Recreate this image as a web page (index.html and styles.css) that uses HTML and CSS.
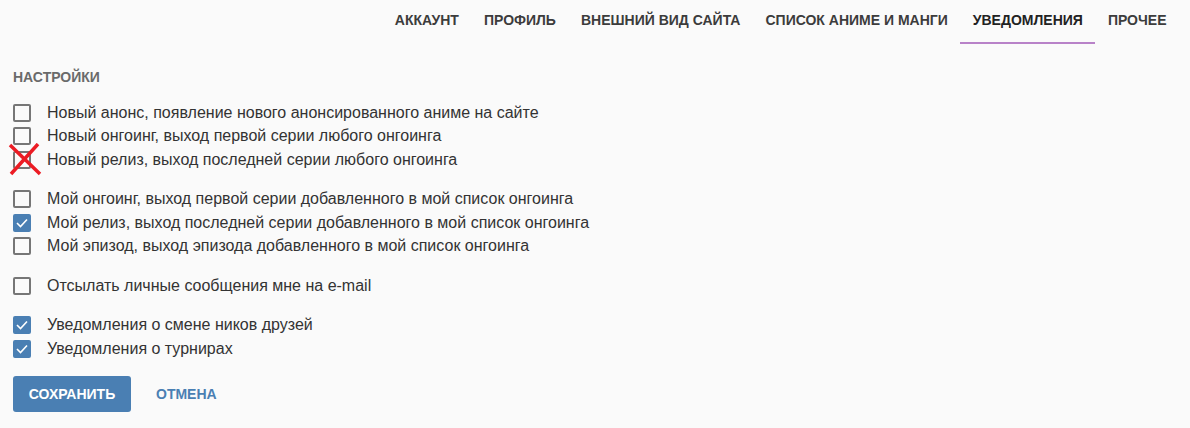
FILE: index.html
```html
<!DOCTYPE html>
<html lang="ru">
<head>
<meta charset="utf-8">
<link rel="stylesheet" href="styles.css">
</head>
<body>
<nav class="tabs">
  <a class="tab">Аккаунт</a>
  <a class="tab">Профиль</a>
  <a class="tab">Внешний вид сайта</a>
  <a class="tab">Список аниме и манги</a>
  <a class="tab active">Уведомления</a>
  <a class="tab">Прочее</a>
</nav>
<main class="content">
  <h3 class="section-title">Настройки</h3>
  <div class="group">
    <label class="row"><span class="box"></span><span>Новый анонс, появление нового анонсированного аниме на сайте</span></label>
    <label class="row"><span class="box"></span><span>Новый онгоинг, выход первой серии любого онгоинга</span></label>
    <label class="row"><span class="box crossed"><svg class="cross" width="34" height="33" viewBox="0 0 34 33"><path d="M2 2 L32 31 M30 1 L3 31" stroke="#ec1c24" stroke-width="3.5" fill="none"/></svg></span><span>Новый релиз, выход последней серии любого онгоинга</span></label>
  </div>
  <div class="group">
    <label class="row"><span class="box"></span><span>Мой онгоинг, выход первой серии добавленного в мой список онгоинга</span></label>
    <label class="row"><span class="box checked"><svg width="12" height="10" viewBox="0 0 12 10"><path d="M1 5 L4.5 8.5 L11 1.5" stroke="#fff" stroke-width="1.6" fill="none"/></svg></span><span>Мой релиз, выход последней серии добавленного в мой список онгоинга</span></label>
    <label class="row"><span class="box"></span><span>Мой эпизод, выход эпизода добавленного в мой список онгоинга</span></label>
  </div>
  <div class="group">
    <label class="row"><span class="box"></span><span>Отсылать личные сообщения мне на e-mail</span></label>
  </div>
  <div class="group">
    <label class="row"><span class="box checked"><svg width="12" height="10" viewBox="0 0 12 10"><path d="M1 5 L4.5 8.5 L11 1.5" stroke="#fff" stroke-width="1.6" fill="none"/></svg></span><span>Уведомления о смене ников друзей</span></label>
    <label class="row"><span class="box checked"><svg width="12" height="10" viewBox="0 0 12 10"><path d="M1 5 L4.5 8.5 L11 1.5" stroke="#fff" stroke-width="1.6" fill="none"/></svg></span><span>Уведомления о турнирах</span></label>
  </div>
  <div class="actions">
    <button class="btn-primary">Сохранить</button>
    <button class="btn-link">Отмена</button>
  </div>
</main>
</body>
</html>
```
FILE: styles.css
```css
* { box-sizing: border-box; }
html, body { margin: 0; padding: 0; }
body {
  background: #fafafa;
  font-family: "Liberation Sans", Arial, sans-serif;
  color: #333;
  width: 1190px;
  height: 428px;
  overflow: hidden;
}
.tabs {
  display: flex;
  justify-content: flex-end;
  padding-right: 11px;
  height: 44px;
}
.tab {
  display: block;
  padding: 12px 12.5px 0;
  font-size: 14px;
  font-weight: bold;
  text-transform: uppercase;
  color: #3c3c3c;
  border-bottom: 2px solid transparent;
}
.tab.active {
  color: #222;
  border-bottom-color: #b882c8;
}
.content {
  padding: 0 13px;
}
.section-title {
  margin: 25px 0 16px;
  font-size: 14px;
  font-weight: bold;
  text-transform: uppercase;
  color: #6a6a6a;
  line-height: 16px;
}
.group {
  display: flex;
  flex-direction: column;
  margin-bottom: 16px;
}
.row {
  display: flex;
  align-items: center;
  height: 23.5px;
  font-size: 16px;
  color: #333;
}
.box {
  position: relative;
  flex: none;
  width: 18px;
  height: 18px;
  border: 2px solid #767676;
  border-radius: 2px;
  margin-right: 16px;
  display: flex;
  align-items: center;
  justify-content: center;
}
.box.checked {
  background: #4a7fb3;
  border-color: #4a7fb3;
}
.cross {
  position: absolute;
  left: -7px;
  top: -10px;
}
.actions {
  display: flex;
  align-items: center;
  gap: 12px;
  margin-top: -1px;
}
.btn-primary {
  width: 118px;
  height: 36px;
  border: none;
  border-radius: 3px;
  background: #4a7fb3;
  color: #fff;
  font-family: "Liberation Sans", Arial, sans-serif;
  font-weight: bold;
  font-size: 14px;
  text-transform: uppercase;
}
.btn-link {
  border: none;
  background: none;
  padding: 0 13px;
  color: #4a7fb3;
  font-family: "Liberation Sans", Arial, sans-serif;
  font-weight: bold;
  font-size: 14px;
  text-transform: uppercase;
}
```
